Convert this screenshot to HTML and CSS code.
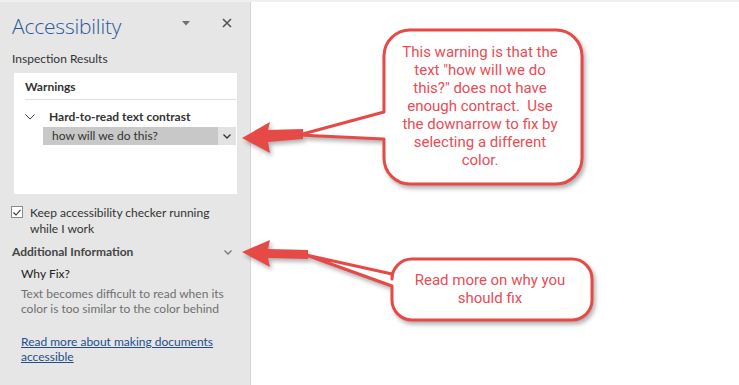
FILE: index.html
```html
<!DOCTYPE html>
<html lang="en">
  <head>
    <meta charset="UTF-8" />
    <title>Accessibility checker</title>
    <link rel="stylesheet" href="styles.css">
  </head>
  <body>
    <!-- task pane -->
    <aside class="pane">
      <header class="pane-head">
        <h1>Accessibility</h1>
        <span class="pane-menu">
          <svg width="8" height="5" viewBox="0 0 8 5"><path d="M0 0H8L4 4.5Z" fill="#707070"/></svg>
        </span>
        <span class="pane-close">
          <svg width="10" height="10" viewBox="0 0 10 10"><path d="M1 1L9 9M9 1L1 9" stroke="#555" stroke-width="1.6"/></svg>
        </span>
      </header>
      <p class="pane-sub">Inspection Results</p>

      <section class="results">
        <h2>Warnings</h2>
        <div class="issue">
          <svg class="chev" width="10" height="6" viewBox="0 0 10 6"><path d="M0.5 0.5L5 5L9.5 0.5" fill="none" stroke="#444" stroke-width="1"/></svg>
          <span>Hard-to-read text contrast</span>
        </div>
        <div class="issue-item">
          <span class="item-name">how will we do this?</span>
          <span class="item-drop">
            <svg width="8" height="5" viewBox="0 0 8 5"><path d="M0.5 0.5L4 4L7.5 0.5" fill="none" stroke="#333" stroke-width="1.3"/></svg>
          </span>
        </div>
      </section>

      <label class="keep">
        <span class="check">
          <svg width="8" height="7" viewBox="0 0 8 7"><path d="M0.5 3.5L3 6L7.5 0.8" fill="none" stroke="#333" stroke-width="1.1"/></svg>
        </span>
        <span>Keep accessibility checker running while I work</span>
      </label>

      <div class="info-head">
        <span>Additional Information</span>
        <svg width="8" height="5" viewBox="0 0 8 5"><path d="M0.5 0.5L4 4L7.5 0.5" fill="none" stroke="#777" stroke-width="1.3"/></svg>
      </div>
      <div class="info">
        <p class="info-title">Why Fix?</p>
        <p class="info-text">Text becomes difficult to read when its color is too similar to the color behind</p>
        <a class="info-link" href="#">Read more about making documents accessible</a>
      </div>
    </aside>

    <main class="canvas"></main>

    <!-- annotation layer: arrows and speech bubbles -->
    <div class="notes">
      <svg class="notes-draw" width="739" height="385" viewBox="0 0 739 385">
        <g class="shade">
          <path d="M242 136L270 120L268 128L303 127L303 137L268 140L270 151Z" fill="#e64a47"/>
          <path d="M242 250L270 238L268 247L308 248L308 257L268 256L270 265Z" fill="#e64a47"/>
          <path d="M410 28H556A26 26 0 0 1 582 54V156A26 26 0 0 1 556 182H410A26 26 0 0 1 384 156V137L299 133L384 110V54A26 26 0 0 1 410 28Z"
                fill="#fff" stroke="#e64a47" stroke-width="3" stroke-linejoin="round"/>
          <path d="M412 257H572A20 20 0 0 1 592 277V298A20 20 0 0 1 572 318H412A20 20 0 0 1 392 298V284L306 253L392 272V277A20 20 0 0 1 412 257Z"
                fill="#fff" stroke="#e64a47" stroke-width="3" stroke-linejoin="round"/>
        </g>
      </svg>
      <p class="bubble bubble-big">This warning is that the text "how will we do this?" does not have enough contract.&nbsp; Use the downarrow to fix by selecting a different color.</p>
      <p class="bubble bubble-small">Read more on why you should fix</p>
    </div>
  </body>
</html>
```

FILE: styles.css
```css
/* ------- page */
body {
  margin: 0;
  width: 739px;
  height: 385px;
  display: flex;
  position: relative;
  overflow: hidden;
  background: #fff;
  border-top: 2px solid #efefef;
  box-sizing: border-box;
  font-family: Lato, "Open Sans", sans-serif;
  color: #333;
}

/* ------- task pane */
.pane {
  width: 250px;
  flex: none;
  background: #e6e6e6;
  border-right: 1px solid #d5d5d5;
  font-size: 12px;
}

.pane-head {
  display: flex;
  align-items: center;
  height: 32px;
  padding: 8px 0 0 12px;
}

.pane-head h1 {
  flex: 1;
  margin: 0;
  font-family: "Open Sans", sans-serif;
  font-weight: 300;
  font-size: 21px;
  color: #2b5797;
  letter-spacing: -0.2px;
}

.pane-menu {
  display: flex;
  margin-right: 32px;
  margin-top: -6px;
}

.pane-close {
  display: flex;
  margin-right: 18px;
  margin-top: -6px;
}

.pane-sub {
  margin: 9px 0 0 12px;
  line-height: 15px;
}

/* ------- results box */
.results {
  margin: 7px 13px 0 14px;
  height: 121px;
  background: #fff;
  padding: 6px 1px 0 11px;
  box-sizing: border-box;
}

.results h2 {
  margin: 0;
  font-size: 12px;
  font-weight: bold;
  line-height: 16px;
  padding-bottom: 4px;
  border-bottom: 1px solid #e1e1e1;
}

.issue {
  display: flex;
  align-items: center;
  margin-top: 9px;
  font-weight: bold;
  line-height: 16px;
}

.issue .chev {
  margin: 0 14px 0 0;
}

.issue-item {
  display: flex;
  margin: 2px 0 0 18px;
  height: 18px;
  background: #c8c8c8;
}

.item-name {
  flex: 1;
  padding-left: 9px;
  line-height: 18px;
}

.item-drop {
  width: 18px;
  display: flex;
  align-items: center;
  justify-content: center;
  background: #e3e3e3;
}

/* ------- checkbox */
.keep {
  display: flex;
  align-items: flex-start;
  margin: 11px 20px 0 11px;
  line-height: 16px;
}

.check {
  width: 10px;
  height: 10px;
  flex: none;
  display: flex;
  align-items: center;
  justify-content: center;
  background: #fff;
  border: 1px solid #8a8a8a;
  margin: 1px 7px 0 0;
}

/* ------- additional information */
.info-head {
  display: flex;
  align-items: center;
  justify-content: space-between;
  margin: 7px 18px 0 12px;
  font-weight: bold;
  color: #444;
  line-height: 16px;
}

.info {
  padding: 0 6px 0 21px;
}

.info-title {
  margin: 6px 0 0;
  color: #222;
  line-height: 16px;
}

.info-text {
  margin: 4px 0 0;
  color: #707070;
  line-height: 15px;
}

.info-link {
  display: block;
  margin-top: 18px;
  color: #1f4e8d;
  line-height: 15px;
}

/* ------- drawing area */
.canvas {
  flex: 1;
}

/* ------- annotations */
.notes {
  position: absolute;
  top: 0;
  left: 0;
  width: 739px;
  height: 385px;
  pointer-events: none;
}

.notes-draw {
  display: block;
}

.shade {
  filter: drop-shadow(2px 3px 2px rgba(0, 0, 0, 0.3));
}

.bubble {
  position: absolute;
  margin: 0;
  font-family: Roboto, "Liberation Sans", sans-serif;
  font-size: 15px;
  line-height: 18px;
  color: #e94c54;
  text-align: center;
}

.bubble-big {
  left: 400px;
  top: 41px;
  width: 160px;
}

.bubble-small {
  left: 400px;
  top: 269px;
  width: 180px;
}
```
